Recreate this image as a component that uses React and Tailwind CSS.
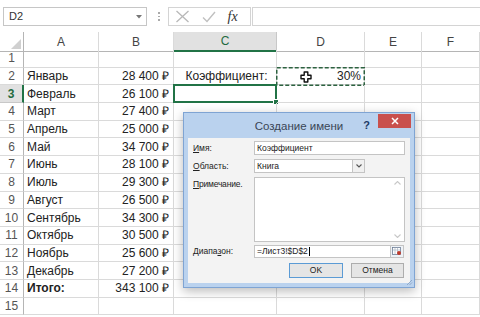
import React from 'react';

const GRID = 'grid grid-cols-[24px_75px_75px_103px_88px_57px_58px]';

const rows = [
  ['', ''],
  ['Январь', '28 400 ₽'],
  ['Февраль', '26 100 ₽'],
  ['Март', '27 400 ₽'],
  ['Апрель', '25 000 ₽'],
  ['Май', '34 700 ₽'],
  ['Июнь', '28 100 ₽'],
  ['Июль', '29 300 ₽'],
  ['Август', '26 500 ₽'],
  ['Сентябрь', '34 300 ₽'],
  ['Октябрь', '30 500 ₽'],
  ['Ноябрь', '25 600 ₽'],
  ['Декабрь', '27 200 ₽'],
  ['Итого:', '343 100 ₽'],
  ['', ''],
];

function FormulaBar() {
  return (
    <div className="flex h-[32px] items-start pt-[7px]">
      <div className="ml-[3px] flex h-[19px] w-[144px] items-center justify-between border border-[#c6c6c6] pl-[5px] pr-[4px] text-[11px] text-[#333]">
        <span>D2</span>
        <svg width="6" height="4" viewBox="0 0 6 4">
          <path d="M0 0 H6 L3 3.5 Z" fill="#777" />
        </svg>
      </div>
      <div className="ml-[11px] mt-[5px] flex flex-col gap-[2px]">
        <span className="h-[1.5px] w-[1.5px] bg-[#aaa]" />
        <span className="h-[1.5px] w-[1.5px] bg-[#aaa]" />
        <span className="h-[1.5px] w-[1.5px] bg-[#aaa]" />
      </div>
      <div className="ml-[8px] flex h-[19px] w-[83px] items-center border border-[#d4d4d4] pl-[6px]">
        <svg width="15" height="13" viewBox="0 0 15 13">
          <path d="M1.5 1 L13.5 12 M13.5 1 L1.5 12" stroke="#b8b8b8" strokeWidth="1.3" fill="none" />
        </svg>
        <svg className="ml-[12px]" width="14" height="12" viewBox="0 0 14 12">
          <path d="M1 6.5 L5 10.5 L13 1" stroke="#c0c0c0" strokeWidth="1.4" fill="none" />
        </svg>
        <span className="ml-[12px] font-['Liberation_Serif',serif] text-[14px] italic text-[#333]">fx</span>
      </div>
      <div className="ml-[1px] h-[19px] flex-1 border border-r-0 border-[#d4d4d4]" />
    </div>
  );
}

function HeaderRow() {
  const cols = ['A', 'B', 'C', 'D', 'E', 'F'];
  return (
    <div className={`${GRID} h-[18px] text-[12px] text-[#444]`}>
      <div className="relative border-b border-r border-[#b5b5b5]">
        <svg className="absolute bottom-[2px] right-[2px]" width="10" height="10" viewBox="0 0 10 10">
          <path d="M10 0 V10 H0 Z" fill="#d0d0d0" />
        </svg>
      </div>
      {cols.map((c) =>
        c === 'C' ? (
          <div key={c} className="flex items-center justify-center border-b-2 border-r border-b-[#217346] border-r-[#c8c8c8] bg-[#e1e1e1] text-[#1f6b3f]">
            {c}
          </div>
        ) : (
          <div key={c} className="flex items-center justify-center border-b border-r border-b-[#b5b5b5] border-r-[#dadada]">
            {c}
          </div>
        )
      )}
    </div>
  );
}

function Cursor() {
  return (
    <svg className="absolute left-[23px] top-[3px]" width="12" height="12" viewBox="0 0 12 12">
      <path d="M4.2 1 H7.8 V4.2 H11 V7.8 H7.8 V11 H4.2 V7.8 H1 V4.2 H4.2 Z" fill="#fff" stroke="#111" strokeWidth="1.4" strokeLinejoin="round" />
    </svg>
  );
}

function SheetRow({ n, a, b }) {
  const sel = n === 3;
  const total = n === 14;
  const cell = 'border-b border-r border-[#dadada]';
  return (
    <div className={`${GRID} h-[17.7px] text-[12px] leading-none`}>
      <div
        className={
          sel
            ? 'flex items-center justify-center border-b border-r-2 border-b-[#c8c8c8] border-r-[#217346] bg-[#e1e1e1] font-bold text-[#1f6b3f]'
            : 'flex items-center justify-center border-b border-r border-b-[#dadada] border-r-[#b5b5b5] text-[#555]'
        }
      >
        {n}
      </div>
      <div className={`${cell} flex items-center pl-[3px] ${total ? 'font-bold' : ''}`}>{a}</div>
      <div className={`${cell} flex items-center justify-end pr-[4px]`}>{b}</div>
      <div className={`${cell} relative flex items-center justify-center`}>
        {n === 2 && <span className="pl-[3px]">Коэффициент:</span>}
        {sel && (
          <>
            <div className="absolute -left-[1px] -top-[1px] bottom-[-1px] right-[-1px] border-2 border-[#217346]" />
            <div className="absolute -bottom-[3px] -right-[3px] h-[6px] w-[6px] border border-white bg-[#217346]" />
          </>
        )}
      </div>
      <div className={`${cell} relative flex items-center justify-end pr-[3px]`}>
        {n === 2 && (
          <>
            <span>30%</span>
            <Cursor />
            <svg className="absolute -left-[1px] -top-[1px]" width="89" height="19" viewBox="0 0 89 19">
              <rect x="0.75" y="0.75" width="87.5" height="17.5" fill="none" stroke="#2d6240" strokeWidth="1.5" strokeDasharray="4 2" />
            </svg>
          </>
        )}
      </div>
      <div className={cell} />
      <div className={cell} />
    </div>
  );
}

function Label({ k, rest, className = '' }) {
  return (
    <span className={`block w-[61px] shrink-0 text-[8.5px] text-[#222] ${className}`}>
      <u className="underline-offset-1">{k}</u>
      {rest}
    </span>
  );
}

function NameDialog() {
  return (
    <div className="absolute left-[183px] top-[112px] flex h-[176px] w-[232px] flex-col border border-[#7fa4d3] bg-[#bad2ee] font-['Liberation_Sans',Arial,sans-serif] shadow-[0_3px_10px_rgba(0,0,0,0.28)]">
      <div className="grid h-[25px] grid-cols-[1fr_auto_1fr] items-start">
        <div />
        <div className="pt-[5px] text-[11.5px] text-[#3a4656]">Создание имени</div>
        <div className="flex items-start justify-end gap-[8px] pr-[3px]">
          <span className="pt-[4px] text-[11px] font-bold text-[#1c3a66]">?</span>
          <div className="mt-[1px] flex h-[14px] w-[33px] items-center justify-center bg-[#c9504d]">
            <svg width="8" height="8" viewBox="0 0 8 8">
              <path d="M1 1 L7 7 M7 1 L1 7" stroke="#fff" strokeWidth="1.5" />
            </svg>
          </div>
        </div>
      </div>
      <div className="mx-[4px] mb-[4px] flex flex-1 flex-col bg-[#f3f3f3] pl-[5px] pr-[5px] pt-[3px] text-[8.5px] text-[#222]">
        <div className="flex h-[14px] items-center">
          <Label k="И" rest="мя:" />
          <div className="flex h-[14px] w-[151px] items-center border border-[#c4c4c4] bg-white pl-[2px]">Коэффициент</div>
        </div>
        <div className="mt-[4px] flex h-[14px] items-center">
          <Label k="О" rest="бласть:" />
          <div className="flex h-[14px] w-[111px] items-center border border-[#c4c4c4] bg-white pl-[2px]">
            <span className="flex-1">Книга</span>
            <div className="flex h-full w-[12px] items-center justify-center border-l border-[#c4c4c4] bg-[#f0f0f0]">
              <svg width="6" height="4" viewBox="0 0 6 4">
                <path d="M0.5 0.5 L3 3 L5.5 0.5" stroke="#555" strokeWidth="1.1" fill="none" />
              </svg>
            </div>
          </div>
        </div>
        <div className="mt-[4px] flex h-[65px] items-start">
          <Label k="П" rest="римечание." className="pt-[1px] tracking-[-0.2px]" />
          <div className="flex h-[65px] w-[151px] flex-col items-end justify-between border border-[#c4c4c4] bg-white px-[3px] py-[3px]">
            <svg width="7" height="4" viewBox="0 0 7 4">
              <path d="M0.5 3.5 L3.5 0.5 L6.5 3.5" stroke="#c8c8c8" strokeWidth="1.1" fill="none" />
            </svg>
            <svg width="7" height="4" viewBox="0 0 7 4">
              <path d="M0.5 0.5 L3.5 3.5 L6.5 0.5" stroke="#c8c8c8" strokeWidth="1.1" fill="none" />
            </svg>
          </div>
        </div>
        <div className="mt-[3px] flex h-[13px] items-center">
          <span className="w-[61px] shrink-0">
            Диапа<u className="underline-offset-1">з</u>он:
          </span>
          <div className="flex h-[13px] w-[137px] items-center border border-[#c4c4c4] bg-white pl-[2px]">
            =Лист3!$D$2<span className="ml-[1px] h-[9px] w-px bg-black" />
          </div>
          <div className="flex h-[13px] w-[13px] items-center justify-center border border-l-0 border-[#c4c4c4] bg-[#eef2f7]">
            <svg width="10" height="9" viewBox="0 0 10 9">
              <rect x="0.5" y="0.5" width="8" height="7" fill="#fff" stroke="#6b7c93" strokeWidth="0.8" />
              <path d="M0.5 3 H8.5 M3 0.5 V7.5 M5.5 0.5 V7.5" stroke="#9aa7b8" strokeWidth="0.6" />
              <circle cx="7" cy="6" r="2" fill="#c0392b" />
            </svg>
          </div>
        </div>
        <div className="mt-[5px] flex h-[15px] justify-end gap-[8px] pr-[1px]">
          <div className="flex w-[54px] items-center justify-center border border-[#5b9bd5] bg-[#e5e5e5]">OK</div>
          <div className="flex w-[53px] items-center justify-center border border-[#adadad] bg-[#e5e5e5]">Отмена</div>
        </div>
      </div>
      <svg className="absolute bottom-[1px] right-[1px]" width="8" height="8" viewBox="0 0 8 8">
        <path d="M7 2 L2 7 M7 4.5 L4.5 7" stroke="#8aa4c4" strokeWidth="0.9" />
      </svg>
    </div>
  );
}

export default function App() {
  return (
    <div className="relative h-[317px] w-[480px] overflow-hidden bg-white font-['Liberation_Sans',Arial,sans-serif] text-[12px] text-[#222]">
      <FormulaBar />
      <HeaderRow />
      {rows.map(([a, b], i) => (
        <SheetRow key={i} n={i + 1} a={a} b={b} />
      ))}
      <NameDialog />
    </div>
  );
}
